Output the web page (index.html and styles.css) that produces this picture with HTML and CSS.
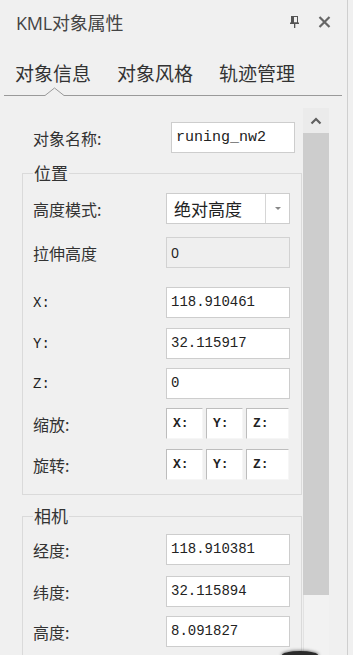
FILE: index.html
```html
<!DOCTYPE html>
<html lang="zh">
<head>
  <meta charset="UTF-8">
  <meta name="viewport" content="width=device-width, initial-scale=1">
  <title>KML对象属性</title>
  <link rel="stylesheet" href="styles.css">
</head>
<body>
  <div class="window">
    <div class="header">
      <span class="title">KML对象属性</span>
      <span class="tools">
        <svg class="pin" width="9" height="12" viewBox="0 0 9 12">
          <rect x="1.5" y="0.5" width="6" height="6.5" fill="none" stroke="#555" stroke-width="1"/>
          <rect x="1.5" y="0.5" width="2.5" height="6.5" fill="#555"/>
          <rect x="0" y="6.5" width="9" height="1.5" fill="#555"/>
          <rect x="4" y="8" width="1.3" height="4" fill="#555"/>
        </svg>
        <svg class="close" width="13" height="12" viewBox="0 0 13 12">
          <path d="M1.5 1L11.5 11M11.5 1L1.5 11" stroke="#666" stroke-width="2.2"/>
        </svg>
      </span>
    </div>

    <div class="tabs">
      <span class="tab">对象信息</span>
      <span class="tab">对象风格</span>
      <span class="tab">轨迹管理</span>
    </div>
    <svg class="tab-line" width="347" height="12" viewBox="0 0 347 12">
      <polyline points="4,8.5 45,8.5 54.5,1 64,8.5 342,8.5" fill="none" stroke="#9a9a9a" stroke-width="1"/>
    </svg>

    <div class="body">
      <div class="content">
        <div class="row name-row">
          <span class="label">对象名称:</span>
          <div class="field mono">runing_nw2</div>
        </div>

        <fieldset class="group">
          <legend>位置</legend>
          <div class="row">
            <span class="label">高度模式:</span>
            <div class="combo">
              <span class="combo-text">绝对高度</span>
              <span class="combo-btn"><span class="caret"></span></span>
            </div>
          </div>
          <div class="row gap-13">
            <span class="label">拉伸高度</span>
            <div class="field disabled">0</div>
          </div>
          <div class="row gap-19">
            <span class="label mono">X:</span>
            <div class="field mono">118.910461</div>
          </div>
          <div class="row gap-10">
            <span class="label mono">Y:</span>
            <div class="field mono">32.115917</div>
          </div>
          <div class="row gap-9">
            <span class="label mono">Z:</span>
            <div class="field mono">0</div>
          </div>
          <div class="row gap-9">
            <span class="label">缩放:</span>
            <div class="mini-group">
              <div class="mini mono">X:</div>
              <div class="mini mono">Y:</div>
              <div class="mini wide mono">Z:</div>
            </div>
          </div>
          <div class="row gap-10">
            <span class="label">旋转:</span>
            <div class="mini-group">
              <div class="mini mono">X:</div>
              <div class="mini mono">Y:</div>
              <div class="mini wide mono">Z:</div>
            </div>
          </div>
        </fieldset>

        <fieldset class="group camera">
          <legend>相机</legend>
          <div class="row">
            <span class="label">经度:</span>
            <div class="field mono">118.910381</div>
          </div>
          <div class="row gap-11">
            <span class="label">纬度:</span>
            <div class="field mono">32.115894</div>
          </div>
          <div class="row gap-9">
            <span class="label">高度:</span>
            <div class="field mono">8.091827</div>
          </div>
        </fieldset>
      </div>

      <div class="scrollbar">
        <div class="scroll-up">
          <svg width="12" height="8" viewBox="0 0 12 8">
            <polyline points="1.5,6.5 6,2 10.5,6.5" fill="none" stroke="#606060" stroke-width="2.2"/>
          </svg>
        </div>
        <div class="thumb"></div>
        <div class="track"></div>
      </div>
    </div>
  </div>

  <div class="blob"></div>
</body>
</html>
```

FILE: styles.css
```css
html, body {
  margin: 0;
  padding: 0;
  height: 655px;
  overflow: hidden;
}

body {
  background: #f0f0f0;
  font-family: "Noto Sans CJK SC", "Noto Sans", sans-serif;
  color: #333;
  position: relative;
}

.window {
  width: 347px;
  height: 655px;
  border-right: 1px solid #cfcfcf;
  overflow: hidden;
}

.header {
  display: flex;
  align-items: center;
  height: 44px;
  padding: 0 16px;
}

.title {
  flex: 1;
  font-family: "Open Sans", "Noto Sans CJK SC", sans-serif;
  font-size: 18px;
  color: #444;
  letter-spacing: -0.2px;
}

.tools {
  display: flex;
  align-items: center;
  gap: 19px;
}

.tabs {
  display: flex;
  gap: 26px;
  padding: 17px 0 0 15px;
  line-height: 24px;
}

.tab {
  font-size: 19px;
  color: #333;
}

.tab-line {
  display: block;
  margin-top: 2px;
}

.body {
  display: flex;
  margin-top: 9px;
}

.content {
  width: 303px;
  height: 547px;
  overflow: hidden;
  padding-top: 14px;
  box-sizing: border-box;
}

.row {
  display: flex;
  align-items: center;
  height: 31px;
}

.gap-9 { margin-top: 9px; }
.gap-10 { margin-top: 10px; }
.gap-11 { margin-top: 11px; }
.gap-13 { margin-top: 13px; }
.gap-19 { margin-top: 19px; }

.label {
  width: 133px;
  font-size: 16px;
  color: #333;
}

.label.mono {
  font-size: 14px;
  color: #222;
}

.name-row {
  padding-left: 33px;
}

.name-row .label {
  width: 138px;
}

.mono {
  font-family: "Liberation Mono", "DejaVu Sans Mono", monospace;
}

.field {
  box-sizing: border-box;
  width: 124px;
  height: 31px;
  line-height: 29px;
  padding-left: 4px;
  background: #fff;
  border: 1px solid #cdcdcd;
  font-size: 14px;
  color: #222;
}

.name-row .field {
  font-size: 15px;
}

.field.disabled {
  background: #efefef;
  border-color: #d2d2d2;
  font-family: "Noto Sans", sans-serif;
  font-size: 14px;
}

.group {
  margin: 10px 1px 0 22px;
  padding: 10px 10px 14px 10px;
  border: 1px solid #dadada;
  min-width: 0;
}

.group legend {
  padding: 0 1px;
  font-size: 17px;
  line-height: 20px;
  color: #333;
}

.camera {
  margin-top: 11px;
  padding-top: 8px;
}

.combo {
  box-sizing: border-box;
  display: flex;
  width: 124px;
  height: 31px;
  background: #fff;
  border: 1px solid #cdcdcd;
}

.combo-text {
  flex: 1;
  padding-left: 7px;
  font-size: 17px;
  line-height: 29px;
  color: #222;
}

.combo-btn {
  width: 23px;
  border-left: 1px solid #d6d6d6;
  display: flex;
  align-items: center;
  justify-content: center;
}

.caret {
  width: 0;
  height: 0;
  border-left: 3px solid transparent;
  border-right: 3px solid transparent;
  border-top: 3px solid #888;
}

.mini-group {
  display: flex;
  gap: 3px;
}

.mini {
  box-sizing: border-box;
  width: 37px;
  height: 31px;
  line-height: 30px;
  padding-left: 6px;
  background: #fff;
  border-top: 1px solid #bdbdbd;
  border-left: 1px solid #bdbdbd;
  border-right: 1px solid #f6f6f6;
  border-bottom: 1px solid #f6f6f6;
  font-size: 13px;
  font-weight: bold;
  color: #222;
}

.mini.wide {
  width: 43px;
}

.scrollbar {
  width: 26px;
  display: flex;
  flex-direction: column;
  height: 547px;
}

.scroll-up {
  height: 25px;
  background: #ebebeb;
  display: flex;
  align-items: center;
  justify-content: center;
}

.thumb {
  height: 462px;
  background: #cdcdcd;
}

.track {
  flex: 1;
  background: #f2f2f2;
  border-left: 1px solid #e2e2e2;
}

.blob {
  position: absolute;
  left: 282px;
  bottom: 0;
  width: 36px;
  height: 4px;
  border-radius: 18px 18px 0 0 / 4px 4px 0 0;
  background: #2b2b2b;
  box-shadow: 0 0 3px 1px rgba(40, 40, 40, 0.5);
}
```
